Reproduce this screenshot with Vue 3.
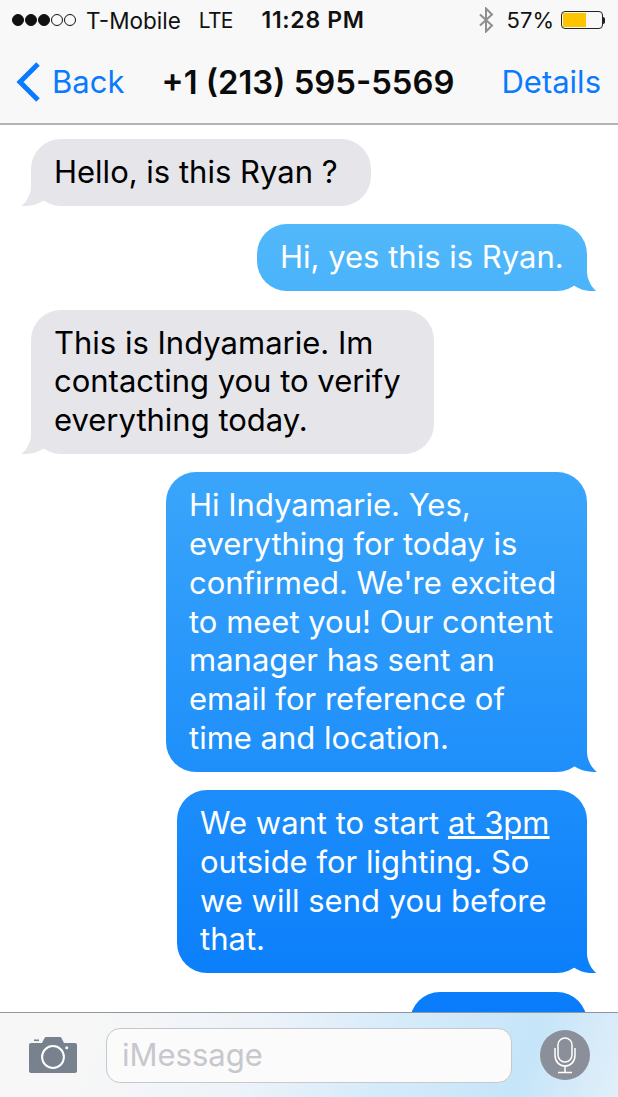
<template>
  <div class="phone">
    <header class="top">
      <div class="status">
        <div class="signal">
          <span v-for="n in 5" :key="n" :class="['dot', { on: n <= 3 }]"></span>
        </div>
        <span class="carrier">T-Mobile</span>
        <span class="net">LTE</span>
        <span class="clock">11:28 PM</span>
        <div class="status-right">
          <svg class="bt" width="16" height="26" viewBox="0 0 16 26">
            <path d="M2 7.5 L14 18.5 L8 24.5 L8 1.5 L14 7.5 L2 18.5" fill="none" stroke="#8e8e8e" stroke-width="2" />
          </svg>
          <span class="pct">57%</span>
          <div class="battery"><div class="charge"></div></div>
          <div class="nub"></div>
        </div>
      </div>
      <nav class="nav">
        <div class="back">
          <svg width="26" height="42" viewBox="0 0 26 42">
            <path d="M23 3 L5 21 L23 39" fill="none" stroke="#0a7afe" stroke-width="5" />
          </svg>
          <span>Back</span>
        </div>
        <div class="title">+1 (213) 595-5569</div>
        <div class="details">Details</div>
      </nav>
    </header>

    <main class="thread">
      <div
        v-for="(msg, i) in messages"
        :key="i"
        :class="['bubble', msg.mine ? 'mine' : 'theirs']"
        :style="{ width: msg.width + 'px' }"
      >
        <div v-for="(line, j) in msg.lines" :key="j" class="line">
          <template v-if="line.link">{{ line.text }}<u>{{ line.link }}</u></template>
          <template v-else>{{ line.text }}</template>
        </div>
      </div>
    </main>

    <footer class="composer">
      <svg class="camera" width="48" height="36" viewBox="0 0 48 36">
        <path d="M2 6 H13 L15.5 1 C15.8 0.4 16.3 0 17 0 H31 C31.7 0 32.2 0.4 32.5 1 L35 6 H46 C47.2 6 48 6.8 48 8 V34 C48 35.2 47.2 36 46 36 H2 C0.8 36 0 35.2 0 34 V8 C0 6.8 0.8 6 2 6 Z" fill="#78828f" />
        <rect x="5" y="2.5" width="5" height="1.6" fill="#78828f" />
        <circle cx="24" cy="20" r="10.9" fill="none" stroke="#fff" stroke-width="2" />
        <circle cx="37.7" cy="10.7" r="1.5" fill="#fff" />
      </svg>
      <div class="field">iMessage</div>
      <div class="mic">
        <svg width="30" height="44" viewBox="0 0 30 44">
          <rect x="8" y="5" width="14" height="24" rx="7" fill="none" stroke="#fff" stroke-width="1.5" />
          <path d="M5 15 V22 C5 29 9.5 33 15 33 C20.5 33 25 29 25 22 V15 M15 33 V39.5 M8 39.5 H22" fill="none" stroke="#fff" stroke-width="1.5" />
        </svg>
      </div>
    </footer>
  </div>
</template>

<script setup>
// bubble widths come from the original wrap, the font here measures a bit differently
const messages = [
  { mine: false, width: 340, lines: [{ text: 'Hello, is this Ryan ?' }] },
  { mine: true, width: 330, lines: [{ text: 'Hi, yes this is Ryan.' }] },
  {
    mine: false,
    width: 403,
    lines: [
      { text: 'This is Indyamarie. Im' },
      { text: 'contacting you to verify' },
      { text: 'everything today.' },
    ],
  },
  {
    mine: true,
    width: 421,
    lines: [
      { text: 'Hi Indyamarie. Yes,' },
      { text: 'everything for today is' },
      { text: "confirmed. We're excited" },
      { text: 'to meet you! Our content' },
      { text: 'manager has sent an' },
      { text: 'email for reference of' },
      { text: 'time and location.' },
    ],
  },
  {
    mine: true,
    width: 410,
    lines: [
      { text: 'We want to start ', link: 'at 3pm' },
      { text: 'outside for lighting. So' },
      { text: 'we will send you before' },
      { text: 'that.' },
    ],
  },
  // only the top of this one is visible above the composer
  { mine: true, width: 177, lines: [{ text: '\u00a0' }] },
]
</script>

<style>
html,
body {
  margin: 0;
  background: #fff;
}
</style>

<style scoped>
.phone {
  width: 618px;
  height: 1097px;
  display: flex;
  flex-direction: column;
  overflow: hidden;
  font-family: Inter, "Liberation Sans", sans-serif;
  background: #fff;
}

.top {
  height: 125px;
  box-sizing: border-box;
  background: #f8f8f8;
  border-bottom: 2px solid #b4b4b4;
  flex: none;
}

.status {
  height: 40px;
  display: flex;
  align-items: center;
  padding-left: 12px;
  font-size: 22.5px;
  color: #111;
}

.signal {
  display: flex;
  gap: 1px;
  margin-right: 10px;
}

.dot {
  width: 10px;
  height: 10px;
  border-radius: 50%;
  border: 1px solid #111;
}

.dot.on {
  background: #111;
}

.net {
  margin-left: 18px;
  font-size: 21px;
  letter-spacing: -0.8px;
}

.clock {
  margin-left: 29px;
  font-size: 23px;
  font-weight: 600;
  letter-spacing: 0.7px;
}

.status-right {
  margin-left: auto;
  display: flex;
  align-items: center;
  padding-right: 13px;
}

.bt {
  margin-right: 13px;
}

.pct {
  margin-right: 7px;
  font-size: 22px;
}

.battery {
  width: 42px;
  height: 18px;
  box-sizing: border-box;
  border: 1px solid #222;
  border-radius: 4px;
  padding: 1px;
}

.charge {
  width: 23px;
  height: 14px;
  background: #fdc500;
}

.nub {
  width: 2px;
  height: 7px;
  background: #222;
  border-radius: 0 2px 2px 0;
}

.nav {
  height: 83px;
  display: grid;
  grid-template-columns: 1fr auto 1fr;
  align-items: center;
  padding: 0 17px 0 15px;
  font-size: 31px;
  color: #0a7afe;
}

.back {
  display: flex;
  align-items: center;
  gap: 11px;
}

.title {
  color: #0b0b0b;
  font-size: 32.8px;
  font-weight: 600;
}

.details {
  text-align: right;
}

.thread {
  flex: 1;
  min-height: 0;
  overflow: hidden;
  display: flex;
  flex-direction: column;
  gap: 18.5px;
  padding: 14px 31px 0;
}

.bubble {
  position: relative;
  box-sizing: border-box;
  padding: 14px 0 14px 23px;
  border-radius: 30px;
  font-size: 31px;
  line-height: 38.75px;
  white-space: nowrap;
  flex: none;
}

.bubble::after {
  content: "";
  position: absolute;
  bottom: 0;
  width: 34px;
  height: 30px;
}

.theirs {
  background: #e5e5ea;
  color: #000;
}

.theirs::after {
  left: -10px;
  background: #e5e5ea;
  clip-path: path("M10 0 L10 10 C10 18 6 26 0 30.5 C8 30.5 17 29 23 24.5 L34 24 L34 0 Z");
}

.mine {
  align-self: flex-end;
  color: #fff;
  background: linear-gradient(#66c9fa, #0076fb) fixed;
}

.mine::after {
  right: -10px;
  background: linear-gradient(#66c9fa, #0076fb) fixed;
  clip-path: path("M24 0 L24 10 C24 18 28 26 34 30.5 C26 30.5 17 29 11 24.5 L0 24 L0 0 Z");
}

.composer {
  height: 85px;
  box-sizing: border-box;
  flex: none;
  display: flex;
  align-items: center;
  padding: 0 28px 0 29px;
  border-top: 1px solid #8e979e;
  background: linear-gradient(110deg, #f7f7f7 14%, #eef3f9 40%, #d6ebfa 62%, #c6e5f9 84%, #e2eff9 100%);
  position: relative;
  z-index: 1;
}

.field {
  width: 406px;
  height: 55px;
  box-sizing: border-box;
  margin-left: 29px;
  padding-left: 15px;
  border: 1.5px solid #c8c8cc;
  border-radius: 14px;
  background: #fbfbfb;
  color: #c7c7cd;
  font-size: 31px;
  line-height: 52px;
}

.mic {
  width: 50px;
  height: 50px;
  margin-left: 28px;
  border-radius: 50%;
  background: #8a8f99;
  display: flex;
  align-items: center;
  justify-content: center;
}
</style>
